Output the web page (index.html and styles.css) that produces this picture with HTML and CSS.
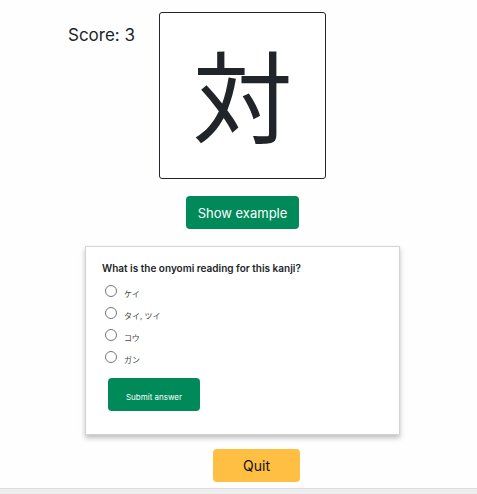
FILE: index.html
```html
<!DOCTYPE html>
<html lang="en">
<head>
<meta charset="utf-8">
<meta name="viewport" content="width=device-width, initial-scale=1">
<title>Kanji quiz</title>
<link rel="stylesheet" href="styles.css">
</head>
<body>
<main class="quiz">
  <div class="top">
    <p class="score">Score: 3</p>
    <div class="kanji" lang="ja">対</div>
  </div>
  <button type="button" class="btn btn-example">Show example</button>
  <form class="card">
    <fieldset class="question">
      <legend class="prompt">What is the onyomi reading for this kanji?</legend>
      <label class="option"><input type="radio" name="reading"><span lang="ja">ケイ</span></label>
      <label class="option"><input type="radio" name="reading"><span lang="ja">タイ, ツイ</span></label>
      <label class="option"><input type="radio" name="reading"><span lang="ja">コウ</span></label>
      <label class="option"><input type="radio" name="reading"><span lang="ja">ガン</span></label>
    </fieldset>
    <button type="button" class="btn btn-submit">Submit answer</button>
  </form>
  <button type="button" class="btn btn-quit">Quit</button>
</main>
<footer class="footer"></footer>
</body>
</html>
```
FILE: styles.css
```css
* {
  box-sizing: border-box;
}

body {
  display: flex;
  flex-direction: column;
  min-height: 100vh;
  margin: 0;
  background: #fefefe;
  color: #212529;
  font-family: Inter, "Noto Sans CJK JP", sans-serif;
}

.quiz {
  display: flex;
  flex: 1;
  flex-direction: column;
  align-items: center;
  padding: 12px 0 6px 8px;
}

.top {
  display: grid;
  grid-template-columns: 1fr auto 1fr;
  column-gap: 24px;
  width: 100%;
}

.score {
  margin: 12px 0 0;
  font-size: 17px;
  line-height: 22px;
  text-align: right;
}

.kanji {
  width: 167px;
  height: 167px;
  border: 1px solid #212529;
  border-radius: 3px;
  background: #fff;
  font-family: "Noto Sans CJK JP", sans-serif;
  font-size: 100px;
  line-height: 160px;
  text-align: center;
}

.btn {
  height: 33px;
  padding: 0;
  border: 0;
  border-radius: 4px;
  font-family: inherit;
  font-size: 14px;
  cursor: pointer;
}

.btn-example {
  width: 113px;
  margin-top: 17px;
  background: #008959;
  color: #fff;
  font-size: 13px;
}

.card {
  align-self: stretch;
  margin: 17px 77px 0;
  padding: 13px 16px 23px;
  border: 1px solid #d3d3d3;
  background: #fff;
  box-shadow: 0 3px 5px rgba(0, 0, 0, 0.25);
}

.question {
  margin: 0;
  padding: 0;
  border: 0;
}

.prompt {
  margin-bottom: 4px;
  padding: 0;
  font-size: 10px;
  font-weight: 600;
  line-height: 16px;
}

.option {
  display: flex;
  align-items: center;
  height: 22px;
  margin-left: 3px;
  color: #444;
  font-size: 8px;
}

.option input {
  appearance: none;
  width: 12px;
  height: 12px;
  margin: 0 7px 0 0;
  border: 1px solid #767676;
  border-radius: 50%;
  background: #fff;
}

.option input:checked {
  background: #008959;
  box-shadow: inset 0 0 0 2px #fff;
}

.option span {
  padding-top: 4px;
}

.btn-submit {
  display: block;
  width: 92px;
  margin: 10px 0 0 6px;
  padding-top: 5px;
  background: #008959;
  color: #fff;
  font-size: 8px;
}

.btn-quit {
  width: 87px;
  margin: 14px 0 0 28px;
  background: #ffbf43;
  color: #111;
}

.footer {
  height: 6px;
  border-top: 1px solid #dcdcdc;
  background: #eee;
}
```
